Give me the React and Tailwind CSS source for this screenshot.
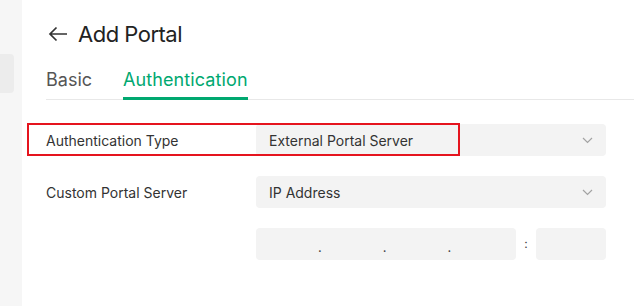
import React from "react";

const Chevron = () => (
  <svg width="11" height="7" viewBox="0 0 11 7" fill="none" className="mr-[13px]">
    <path d="M1 1l4.5 4.5L10 1" stroke="#a3a3a3" strokeWidth="1.2" />
  </svg>
);

export default function App() {
  return (
    <div
      className="flex w-[634px] h-[306px] bg-white overflow-hidden text-[#333]"
      style={{ fontFamily: "Inter, 'Noto Sans', sans-serif" }}
    >
      <div className="w-[22px] shrink-0 bg-[#f6f6f6] pt-[54px]">
        <div className="w-[14px] h-[39px] bg-[#ececec] rounded-r-[4px]" />
      </div>
      <div className="flex-1 pl-[24px]">
        <div className="flex items-center h-[26px] mt-[21px]">
          <svg width="20" height="16" viewBox="0 0 20 16" fill="none" className="ml-[2px]">
            <path d="M19 8H2M8.5 1.5L2 8l6.5 6.5" stroke="#333" strokeWidth="1.7" />
          </svg>
          <span className="ml-[10px] text-[22px] leading-[26px] text-[#222] tracking-[-0.5px]">Add Portal</span>
        </div>
        <div className="flex mt-[17px] border-b border-[#e8e8e8] h-[36px]">
          <div className="text-[18px] leading-[24px] text-[#555] mt-[4px]">Basic</div>
          <div className="ml-[31px] flex flex-col">
            <div className="text-[18px] leading-[24px] text-[#00a870] mt-[4px] tracking-[0.1px]">Authentication</div>
            <div className="mt-auto h-[3px] bg-[#00a870] mb-[-1px]" />
          </div>
        </div>
        <div className="mt-[24px] pr-[28px] flex flex-col gap-[20px] text-[14px]">
          <div className="relative flex items-center h-[32px]">
            <div className="absolute left-[-19px] top-[-1px] w-[433px] h-[33px] border-2 border-[#e5141e] pointer-events-none z-10" />
            <div className="w-[210px] shrink-0">Authentication Type</div>
            <div className="flex-1 h-[32px] bg-[#f3f3f3] rounded-[4px] flex items-center justify-between pl-[13px]">
              <span>External Portal Server</span>
              <Chevron />
            </div>
          </div>
          <div className="flex items-center h-[32px]">
            <div className="w-[210px] shrink-0">Custom Portal Server</div>
            <div className="flex-1 h-[32px] bg-[#f3f3f3] rounded-[4px] flex items-center justify-between pl-[13px]">
              <span>IP Address</span>
              <Chevron />
            </div>
          </div>
          <div className="flex items-center h-[32px]">
            <div className="w-[210px] shrink-0" />
            <div className="w-[260px] h-[32px] bg-[#f3f3f3] rounded-[4px] flex items-center text-[#444] text-[13px] pt-[8px]">
              <span className="ml-[62px]">.</span>
              <span className="ml-[61px]">.</span>
              <span className="ml-[61px]">.</span>
            </div>
            <div className="w-[20px] text-center text-[12px] text-[#444]">:</div>
            <div className="w-[70px] h-[32px] bg-[#f3f3f3] rounded-[4px]" />
          </div>
        </div>
      </div>
    </div>
  );
}
